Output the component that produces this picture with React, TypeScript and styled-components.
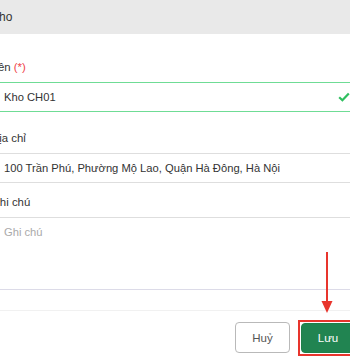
import React from "react";
import styled, { createGlobalStyle } from "styled-components";

const Global = createGlobalStyle`
  html, body { margin: 0; padding: 0; background: #ffffff; overflow: hidden; }
  body { font-family: "Liberation Sans", Arial, Helvetica, sans-serif; }
  * { box-sizing: border-box; }
`;

const Modal = styled.div`
  position: relative;
  width: 400px;
  margin-left: -20px;
  height: 360px;
  background: #fff;
  display: flex;
  flex-direction: column;
`;

const Header = styled.div`
  height: 34px;
  background: #e9e9e9;
  display: flex;
  align-items: center;
  padding: 0 11px;
  font-size: 12px;
  color: #333;
`;

const Body = styled.div`
  padding: 26px 20px 0 13px;
  display: flex;
  flex-direction: column;
`;

const Label = styled.div<{ $mt?: number }>`
  font-size: 11.4px;
  color: #333;
  line-height: 15px;
  margin-left: -2px;
  margin-top: ${(p) => p.$mt ?? 0}px;
  margin-bottom: 7px;
`;

const Req = styled.span`
  color: #f0444a;
`;

const InputWrap = styled.div<{ $valid?: boolean }>`
  position: relative;
  height: 30px;
  border: 1px solid ${(p) => (p.$valid ? "#6fdc95" : "#dedede")};
  display: flex;
  align-items: center;
  padding: 0 10px;
  font-size: 11.2px;
  color: #333;
`;

const TextArea = styled.div`
  height: 73px;
  border: 1px solid #dedede;
  border-bottom-color: #dcdbe8;
  padding: 8px 10px;
  font-size: 11.2px;
  color: #aaa;
`;

const Check = styled.svg`
  position: absolute;
  right: 9px;
  top: 9px;
`;

const Footer = styled.div`
  margin-top: 20px;
  border-top: 1px solid #f1f1f1;
  padding: 11px 5px 0 0;
  display: flex;
  justify-content: flex-end;
  align-items: flex-start;
  gap: 11px;
`;

const Button = styled.button<{ $primary?: boolean }>`
  flex: none;
  height: ${(p) => (p.$primary ? 30 : 31)}px;
  width: ${(p) => (p.$primary ? 54 : 55)}px;
  border-radius: 4px;
  font-family: inherit;
  font-size: 11.5px;
  border: 1px solid ${(p) => (p.$primary ? "#1f8049" : "#b9b9b9")};
  background: ${(p) => (p.$primary ? "#218451" : "#fff")};
  color: ${(p) => (p.$primary ? "#fff" : "#555")};
  padding: 0;
`;

const Highlight = styled.div`
  flex: none;
  margin-top: 1px;
  outline: 2px solid #e8352d;
  outline-offset: 1px;
  display: flex;
`;

const Arrow = styled.svg`
  position: absolute;
  left: 340px;
  top: 252px;
`;

export default function App() {
  return (
    <>
      <Global />
      <Modal>
        <Header>Kho</Header>
        <Body>
          <Label>
            Tên <Req>(*)</Req>
          </Label>
          <InputWrap $valid>
            Kho CH01
            <Check width="12" height="10" viewBox="0 0 12 10">
              <path d="M1.2 5.2 L4.4 8.3 L10.8 1.4" fill="none" stroke="#2fbf5f" strokeWidth="2.2" />
            </Check>
          </InputWrap>
          <Label $mt={19}>Địa chỉ</Label>
          <InputWrap>100 Trần Phú, Phường Mộ Lao, Quận Hà Đông, Hà Nội</InputWrap>
          <Label $mt={12}>Ghi chú</Label>
          <TextArea>Ghi chú</TextArea>
          <Footer>
            <Button>Huỷ</Button>
            <Highlight>
              <Button $primary>Lưu</Button>
            </Highlight>
          </Footer>
        </Body>
        <Arrow width="14" height="64" viewBox="0 0 14 64">
          <line x1="7" y1="0" x2="7" y2="52" stroke="#e8352d" strokeWidth="2" />
          <polygon points="1.5,49 12.5,49 7,61" fill="#e8352d" />
        </Arrow>
      </Modal>
    </>
  );
}
